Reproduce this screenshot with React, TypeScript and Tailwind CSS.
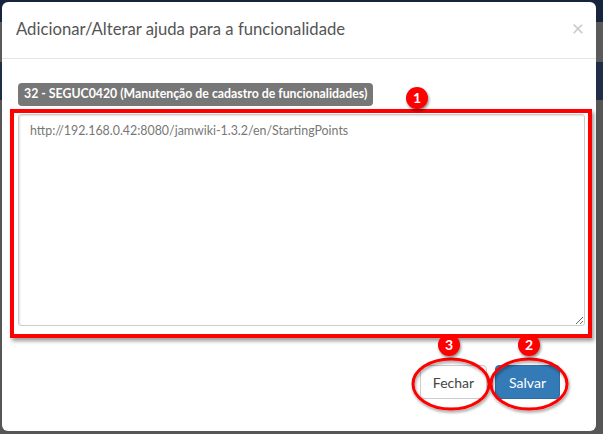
import React from "react";

const URL_TEXT = "http://192.168.0.42:8080/jamwiki-1.3.2/en/StartingPoints";

function Marker({ n, className }: { n: string; className: string }) {
  return (
    <div
      className={`absolute w-[22px] h-[22px] rounded-full bg-[#f00] text-white text-[14px] font-bold leading-none flex items-center justify-center shadow-[1px_2px_3px_rgba(0,0,0,0.45)] ${className}`}
    >
      {n}
    </div>
  );
}

export default function App() {
  return (
    <div className="relative w-[603px] h-[434px] overflow-hidden bg-[#4a4a4a] font-['Lato','Open_Sans',sans-serif]">
      {/* page behind the dimmed overlay */}
      <div className="flex flex-col h-full">
        <div className="h-[22px] bg-[#17243d]" />
        <div className="h-[40px] bg-[#5a5a5a]" />
        <div className="h-[38px] bg-[#1f2d47]" />
        <div className="flex-1 bg-[#565656]" />
      </div>

      {/* modal */}
      <div className="absolute left-[2px] top-[2px] w-[594px] h-[429px] bg-white rounded-[6px] flex flex-col">
        <div className="h-[57px] flex items-center justify-between pl-[14px] pr-[12px] border-b border-[#e5e5e5]">
          <h4 className="text-[16.7px] text-[#555] font-normal">Adicionar/Alterar ajuda para a funcionalidade</h4>
          <span className="text-[21px] leading-none text-[#c9c9c9] -mt-[6px]">×</span>
        </div>

        <div className="px-[16px] pt-[24px] flex flex-col">
          <div className="self-start h-[23px] px-[6px] rounded-[4px] bg-[#777] text-white text-[12.3px] font-bold flex items-center">
            32 - SEGUC0420 (Manutenção de cadastro de funcionalidades)
          </div>
          <textarea
            readOnly
            defaultValue={URL_TEXT}
            className="mt-[8px] w-[567px] h-[212px] border border-[#ccc] rounded-[3px] px-[11px] py-[7px] text-[12.4px] text-[#777] outline-none shadow-[inset_1px_1px_2px_rgba(0,0,0,0.12)] font-['Lato','Open_Sans',sans-serif]"
          />
        </div>

        <div className="flex justify-end gap-[8px] pr-[36px] pt-[39px]">
          <button className="h-[34px] px-[12px] border border-[#ccc] rounded-[4px] bg-white text-[#444] text-[14px]">
            Fechar
          </button>
          <button className="h-[34px] px-[13px] border border-[#2e6da4] rounded-[4px] bg-[#337ab7] text-white text-[14px]">
            Salvar
          </button>
        </div>
      </div>

      {/* annotations */}
      <div className="absolute left-[10px] top-[109px] w-[582px] h-[229px] border-[4px] border-[#f00] shadow-[2px_3px_4px_rgba(0,0,0,0.4)]" />
      <svg className="absolute left-0 top-0" width="603" height="434">
        <defs>
          <filter id="sh" x="-20%" y="-20%" width="140%" height="140%">
            <feDropShadow dx="1" dy="2" stdDeviation="1.5" floodColor="#000" floodOpacity="0.4" />
          </filter>
        </defs>
        <ellipse cx="451" cy="384" rx="38" ry="25" fill="none" stroke="#f00" strokeWidth="3" filter="url(#sh)" />
        <ellipse cx="529" cy="384" rx="38" ry="25" fill="none" stroke="#f00" strokeWidth="3" filter="url(#sh)" />
      </svg>
      <Marker n="1" className="left-[406px] top-[87px]" />
      <Marker n="3" className="left-[438px] top-[334px]" />
      <Marker n="2" className="left-[518px] top-[334px]" />
    </div>
  );
}
